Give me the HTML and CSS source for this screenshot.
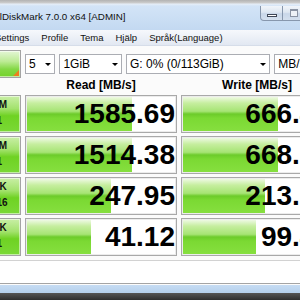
FILE: index.html
```html
<!DOCTYPE html>
<html lang="en">

<head>
    <meta charset="UTF-8" />
    <meta name="viewport" content="width=device-width, initial-scale=1.0" />
    <title>CrystalDiskMark 7.0.0 x64 [ADMIN]</title>
    <link rel="stylesheet" href="styles.css">
</head>

<body>
    <div class="titlebar">
        <span class="title">CrystalDiskMark 7.0.0 x64 [ADMIN]</span>
        <div class="caption-buttons">
            <span class="caption-btn"><span class="glyph-min"></span></span>
            <span class="caption-btn"><span class="glyph-max"></span></span>
        </div>
    </div>

    <div class="menubar">
        <span class="menu-item first">Settings</span>
        <span class="menu-item">Profile</span>
        <span class="menu-item">Tema</span>
        <span class="menu-item">Hjälp</span>
        <span class="menu-item">Språk(Language)</span>
    </div>

    <div class="client">
        <div class="bench">
            <div class="test-btn all">All</div>
            <div class="controls">
                <div class="combo count">5</div>
                <div class="combo size">1GiB</div>
                <div class="combo drive">G: 0% (0/113GiB)</div>
                <div class="combo unit">MB/s</div>
            </div>

            <div></div>
            <div class="col-head">Read [MB/s]</div>
            <div class="col-head">Write [MB/s]</div>

            <div class="test-btn">SEQ1M<br>Q8T1</div>
            <div class="cell"><div class="bar" style="background-size: 105px 100%">1585.69</div></div>
            <div class="cell"><div class="bar" style="background-size: 95px 100%">666.43</div></div>

            <div class="test-btn">SEQ1M<br>Q1T1</div>
            <div class="cell"><div class="bar" style="background-size: 105px 100%">1514.38</div></div>
            <div class="cell"><div class="bar" style="background-size: 95px 100%">668.21</div></div>

            <div class="test-btn">RND4K<br>Q32T16</div>
            <div class="cell"><div class="bar" style="background-size: 84px 100%">247.95</div></div>
            <div class="cell"><div class="bar" style="background-size: 82px 100%">213.66</div></div>

            <div class="test-btn">RND4K<br>Q1T1</div>
            <div class="cell"><div class="bar" style="background-size: 64px 100%">41.12</div></div>
            <div class="cell"><div class="bar" style="background-size: 73px 100%">99.48</div></div>
        </div>

        <div class="comment"></div>
    </div>

    <div class="frame-bottom"></div>
    <div class="taskbar"></div>
</body>

</html>
```

FILE: styles.css
```css
body {
    margin: 0;
    width: 300px;
    height: 300px;
    overflow: hidden;
    background: #3a3a3a;
    font-family: 'Liberation Sans', Arial, sans-serif;
    color: #000;
}

/* window title */

.titlebar {
    display: flex;
    height: 30px;
    background: linear-gradient(#b2b2b2 0, #cdcdcd 3px, #e6eef8 4px, #d3e4f7 6px, #c3d9f1 30px);
}

.title {
    flex: none;
    margin-left: -28.5px;
    padding-top: 11px;
    font-size: 9.8px;
    line-height: 12px;
    white-space: nowrap;
    color: #111;
}

.caption-buttons {
    display: flex;
    flex: none;
    margin-left: auto;
    margin-right: -10px;
    margin-top: 6px;
    height: 14px;
    border: 1px solid #8797ad;
    border-top: none;
    border-radius: 0 0 4px 4px;
    overflow: hidden;
    background: linear-gradient(#f1f5fa 0, #dde6f1 45%, #c9d7e9 55%, #d4e0ee 100%);
}

.caption-btn {
    display: flex;
    align-items: center;
    justify-content: center;
    width: 21px;
}

.caption-btn + .caption-btn {
    width: 27px;
    border-left: 1px solid #8797ad;
    justify-content: flex-start;
    padding-left: 7px;
    box-sizing: border-box;
}

.glyph-min {
    width: 8px;
    height: 1px;
    margin-top: 4px;
    border: 1px solid #3f4656;
    background: #fff;
}

.glyph-max {
    width: 6px;
    height: 5px;
    border: 1px solid #8a93a3;
    border-top-width: 2px;
    background: #eef2f7;
}

/* menu */

.menubar {
    display: flex;
    height: 15px;
    background: linear-gradient(#f6f8fc, #e2e8f2);
    border-bottom: 1px solid #d6dde9;
    white-space: nowrap;
}

.menu-item {
    padding: 0 6px;
    font-size: 9.5px;
    line-height: 15px;
    color: #111;
}

.menu-item.first {
    margin-left: -11px;
}

/* main area */

.client {
    background: #fbfbfb;
    padding-top: 4px;
    padding-bottom: 1px;
}

.bench {
    display: grid;
    grid-template-columns: 63px 152px 152px;
    grid-template-rows: 28px 11px repeat(4, 38px);
    gap: 3px 4px;
    margin-left: -42px;
}

.test-btn {
    display: flex;
    align-items: center;
    justify-content: center;
    text-align: center;
    box-sizing: border-box;
    padding-bottom: 2px;
    border: 1px solid #a3a3a3;
    box-shadow: inset 0 0 0 1px rgba(255, 255, 255, 0.55);
    background: linear-gradient(#c9efa6 0%, #a3e26d 35%, #6fd223 55%, #7ad936 100%);
    font-size: 10px;
    font-weight: bold;
    line-height: 16px;
    color: #111;
}

.test-btn.all {
    position: relative;
    background: linear-gradient(#e4f6d6 0%, #bdeb95 40%, #83d844 70%, #74d22c 100%);
}

.test-btn.all::after {
    content: '';
    position: absolute;
    right: 1px;
    bottom: 1px;
    border-left: 6px solid transparent;
    border-bottom: 6px solid #ef7c1c;
}

.controls {
    grid-column: 2 / span 2;
    display: flex;
    align-items: center;
    gap: 4px;
}

.combo {
    display: flex;
    align-items: center;
    justify-content: space-between;
    box-sizing: border-box;
    height: 20px;
    padding: 0 3px 0 3px;
    border: 1px solid #abadb3;
    background: #fff;
    font-size: 12px;
    white-space: nowrap;
    overflow: hidden;
}

.combo::after {
    content: '';
    flex: none;
    border-left: 3px solid transparent;
    border-right: 3px solid transparent;
    border-top: 3px solid #000;
    margin-top: 1px;
}

.combo.count {
    width: 31px;
}

.combo.size {
    width: 64px;
}

.combo.drive {
    width: 148px;
}

.combo.unit {
    width: 60px;
}

.col-head {
    text-align: center;
    font-size: 12px;
    font-weight: bold;
    line-height: 9px;
}

.cell {
    border: 1px solid #a9a9a9;
    padding: 1px;
    background: #fff;
    box-shadow: inset 0 0 0 1px #ececec;
}

.bar {
    display: flex;
    align-items: center;
    justify-content: flex-end;
    height: 100%;
    background-image: linear-gradient(#eef9e3 0%, #c6ee9f 18%, #a6e474 42%, #6ccb2a 50%, #7bd933 62%, #86df3f 100%);
    background-repeat: no-repeat;
    font-size: 28px;
    font-weight: bold;
    line-height: 1;
    white-space: nowrap;
}

.comment {
    margin-top: 4px;
    height: 22px;
    background: #fff;
    border-top: 1px solid #d2d2d2;
    border-bottom: 1px solid #a4a4a4;
}

/* window frame */

.frame-bottom {
    height: 8px;
    background: linear-gradient(#c6dcf3, #b4cfec);
}

.taskbar {
    height: 7px;
    background: linear-gradient(#555, #2e2e2e);
}
```
